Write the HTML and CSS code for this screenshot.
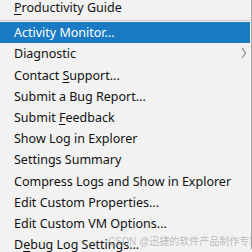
FILE: index.html
```html
<!DOCTYPE html>
<html lang="en">
<head>
    <meta charset="UTF-8">
    <title>Help menu</title>
    <link rel="stylesheet" href="styles.css">
</head>
<body>
    <div class="menu">
        <div class="menu-item top-item"><u>P</u>roductivity Guide</div>
        <div class="separator"></div>
        <div class="menu-item selected">Activity Monitor...</div>
        <div class="menu-item has-sub">
            Diagnostic
            <svg class="sub-arrow" width="6" height="12" viewBox="0 0 6 12">
                <path d="M1 1 L4.5 6 L1 11" fill="none" stroke="#8a8a8a" stroke-width="1.3"/>
            </svg>
        </div>
        <div class="menu-item">Contact <u>S</u>upport...</div>
        <div class="menu-item">Submit a Bug Report...</div>
        <div class="menu-item">Submit <u>F</u>eedback</div>
        <div class="menu-item">Show Log in Explorer</div>
        <div class="menu-item">Settings Summary</div>
        <div class="menu-item">Compress Logs and Show in Explorer</div>
        <div class="menu-item">Edit Custom Properties...</div>
        <div class="menu-item">Edit Custom VM Options...</div>
        <div class="menu-item">D<u>e</u>bug Log Settings...</div>
    </div>
    <div class="watermark">CSDN @迅捷的软件产品制作专家</div>
</body>
</html>
```

FILE: styles.css
```css
* {
    margin: 0;
    padding: 0;
    box-sizing: border-box;
}

body {
    width: 252px;
    height: 252px;
    overflow: hidden;
    background: #f2f2f2;
    font-family: 'Noto Sans', 'Noto Sans CJK SC', sans-serif;
    position: relative;
}

.menu {
    width: 252px;
    height: 252px;
    border-right: 1px solid #a8a8a8;
    padding-right: 1px;
}

.menu-item {
    height: 21.2px;
    line-height: 21px;
    padding-left: 14px;
    font-size: 12.5px;
    color: #111;
    white-space: nowrap;
    position: relative;
}

.top-item {
    margin-top: -3px;
}

.menu-item u {
    text-underline-offset: 2px;
}

.selected {
    background: #1a7ac3;
    color: #fff;
}

.separator {
    height: 1px;
    background: #cdcdcd;
    margin: 2px 0 1px;
}

.sub-arrow {
    position: absolute;
    right: 3px;
    top: 4px;
}

.watermark {
    position: absolute;
    left: 108px;
    top: 233px;
    font-family: 'Liberation Sans', 'Noto Sans CJK SC', sans-serif;
    font-size: 10px;
    color: rgba(150, 150, 150, 0.6);
    white-space: nowrap;
}
```
